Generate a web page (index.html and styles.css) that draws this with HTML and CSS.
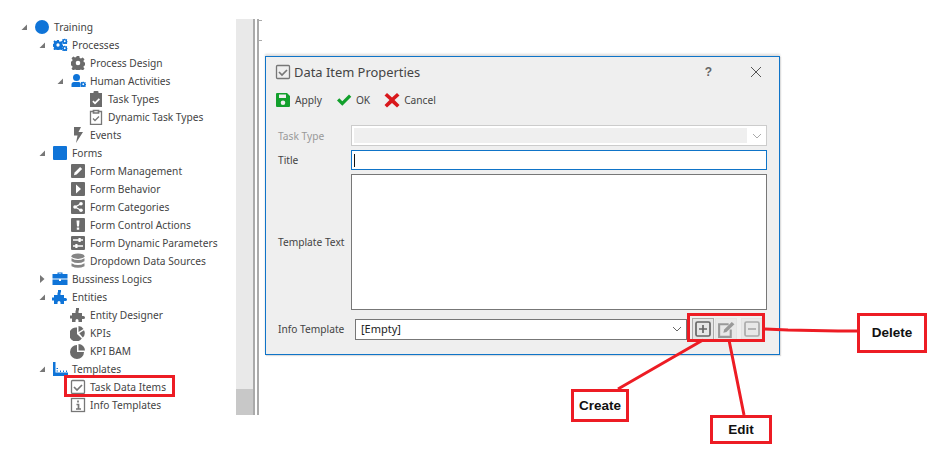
FILE: index.html
```html
<!DOCTYPE html>
<html lang="en">
<head>
<meta charset="utf-8">
<title>Data Item Properties</title>
<link rel="stylesheet" href="styles.css">
</head>
<body>
<svg class="defs" width="0" height="0">
  <symbol id="down" viewBox="0 0 8 8"><path d="M7 1.500V7H1.500z"/></symbol>
  <symbol id="right" viewBox="0 0 8 8"><path d="M2 0l4.500 4L2 8z"/></symbol>
  <symbol id="gear" viewBox="0 0 14 14"><path fill-rule="evenodd" d="M5.700 0h2.600l.4 2 1.300.6 1.700-1.100 1.800 1.800-1.100 1.700.6 1.300 2 .4v2.600l-2 .4-.6 1.300 1.100 1.700-1.800 1.800-1.700-1.100-1.300.6-.4 2H5.700l-.4-2-1.300-.6-1.700 1.100-1.800-1.800 1.100-1.700-.6-1.300-2-.4V5.700l2-.4.6-1.300L.5 2.300l1.800-1.800 1.700 1.100 1.300-.6zM7 4.700a2.300 2.300 0 1 0 0 4.600 2.300 2.300 0 0 0 0-4.600z"/></symbol>
  <symbol id="puzzle" viewBox="0 0 16 14"><path d="M6 0h3v2.500h-.5V5H12v3h1.500a1.500 1.500 0 1 1 0 3H12v3H8.500v-1.500a1.500 1.500 0 0 0-3 0V14H2v-3.500H0V7.500h2V5h3.500V2.500H6z"/></symbol>
</svg>
<main class="page">
  <nav class="tree">
    <div class="row l0"><svg class="arrow"><use href="#down" width="8" height="8"/></svg><svg class="ico blue" viewBox="0 0 16 16"><circle cx="8" cy="8" r="7"/></svg><span>Training</span></div>
    <div class="row l1"><svg class="arrow"><use href="#down" width="8" height="8"/></svg><svg class="ico blue" viewBox="0 0 16 16"><use href="#gear" x="1" y="3" width="10" height="10"/><use href="#gear" x="10" y="1.500" width="5.500" height="5.500"/><use href="#gear" x="10" y="8.500" width="5.500" height="5.500"/></svg><span>Processes</span></div>
    <div class="row l2"><span class="arrow"></span><svg class="ico gray" viewBox="0 0 16 16"><use href="#gear" x="1" y="1" width="14" height="14"/></svg><span>Process Design</span></div>
    <div class="row l2"><svg class="arrow"><use href="#down" width="8" height="8"/></svg><svg class="ico blue" viewBox="0 0 16 16"><circle cx="6.500" cy="4.500" r="3.500"/><path d="M1.500 14v-2.500Q1.500 9 4 9h5Q10.500 9 10.500 10.500V14z"/><use href="#gear" x="10.500" y="8.500" width="5.500" height="5.500"/></svg><span>Human Activities</span></div>
    <div class="row l3"><svg class="ico gray" viewBox="0 0 16 16"><path fill-rule="evenodd" d="M2 2h3.500V1q0-1 1-1h3q1 0 1 1v1H14v14H2zm3.500 7.500L4.300 10.700l2.700 2.800 5-5-1.200-1.200L7 11.100z"/></svg><span>Task Types</span></div>
    <div class="row l3"><svg class="ico outline" viewBox="0 0 16 16"><path d="M5.500 2.500h-3v13h11v-13h-3"/><path class="sw2" d="M5.500 1.500h5v2.500h-5z"/><path d="M5 9.500l2 2 4-4"/></svg><span>Dynamic Task Types</span></div>
    <div class="row l2"><span class="arrow"></span><svg class="ico gray" viewBox="0 0 16 16"><path d="M4 0h7L8.500 5H13L6 16l1.500-7.500H4z"/></svg><span>Events</span></div>
    <div class="row l1"><svg class="arrow"><use href="#down" width="8" height="8"/></svg><svg class="ico blue" viewBox="0 0 16 16"><rect x="1" y="1" width="14" height="14" rx="1"/></svg><span>Forms</span></div>
    <div class="row l2"><span class="arrow"></span><svg class="ico" viewBox="0 0 16 16"><rect class="sq" x="1" y="1" width="14" height="14" rx="1"/><path class="wh" d="M4 12.200l.6-2.600 5.500-5.500 2 2-5.500 5.500z"/></svg><span>Form Management</span></div>
    <div class="row l2"><span class="arrow"></span><svg class="ico" viewBox="0 0 16 16"><rect class="sq" x="1" y="1" width="14" height="14" rx="1"/><path class="wh" d="M6 3.500L11 8l-5 4.500z"/></svg><span>Form Behavior</span></div>
    <div class="row l2"><span class="arrow"></span><svg class="ico" viewBox="0 0 16 16"><rect class="sq" x="1" y="1" width="14" height="14" rx="1"/><circle class="wh" cx="11" cy="4.700" r="1.800"/><circle class="wh" cx="11" cy="11.300" r="1.800"/><circle class="wh" cx="5" cy="8" r="1.800"/><path class="wl" d="M11 4.700L5 8l6 3.300"/></svg><span>Form Categories</span></div>
    <div class="row l2"><span class="arrow"></span><svg class="ico" viewBox="0 0 16 16"><rect class="sq" x="1" y="1" width="14" height="14" rx="1"/><path class="wh" d="M6.500 3.500h3L9 9.500H7zM6.800 10.500h2.400v2.200H6.800z"/></svg><span>Form Control Actions</span></div>
    <div class="row l2"><span class="arrow"></span><svg class="ico" viewBox="0 0 16 16"><rect class="sq" x="1" y="1" width="14" height="14" rx="1"/><path class="wl" d="M3 5h10M3 11h10"/><path class="wh" d="M8.500 3h2.200v4H8.500zM5.300 9h2.200v4H5.300z"/></svg><span>Form Dynamic Parameters</span></div>
    <div class="row l2"><span class="arrow"></span><svg class="ico lt" viewBox="0 0 16 16"><ellipse cx="8" cy="3.200" rx="6.500" ry="2.700"/><path d="M1.500 5.200Q8 9 14.500 5.200v3Q8 12 1.500 8.200zM1.500 10.200Q8 14 14.500 10.200v3Q8 16.500 1.500 13.200z"/></svg><span>Dropdown Data Sources</span></div>
    <div class="row l1"><svg class="arrow"><use href="#right" width="8" height="8"/></svg><svg class="ico blue" viewBox="0 0 16 16"><path fill-rule="evenodd" d="M5.500 3V1.500h5V3H15.500v4.500h-15V3zM6.700 2.500V3h2.600v-.5zM.5 8.500H7V10h2V8.500h6.500V14H.5z"/></svg><span>Bussiness Logics</span></div>
    <div class="row l1"><svg class="arrow"><use href="#down" width="8" height="8"/></svg><svg class="ico blue" viewBox="0 0 16 16"><use href="#puzzle" x="0" y="1" width="16" height="14"/></svg><span>Entities</span></div>
    <div class="row l2"><span class="arrow"></span><svg class="ico gray" viewBox="0 0 16 16"><use href="#puzzle" x="0" y="1" width="16" height="14"/></svg><span>Entity Designer</span></div>
    <div class="row l2"><span class="arrow"></span><svg class="ico gray" viewBox="0 0 16 16"><path d="M7 2.500V9l4.800 4.600A7 7 0 1 1 7 2.500z"/><path d="M8.500 1a6.500 6.500 0 0 1 5 3L8.500 7z"/><path d="M14 5.200A6.500 6.500 0 0 1 12.800 12.600L9.300 8.200z"/></svg><span>KPIs</span></div>
    <div class="row l2"><span class="arrow"></span><svg class="ico gray" viewBox="0 0 16 16"><path d="M7 2v7h7A7 7 0 1 1 7 2z"/><path d="M8.500 1A6.500 6.500 0 0 1 15 7.500H8.500z"/></svg><span>KPI BAM</span></div>
    <div class="row l1"><svg class="arrow"><use href="#down" width="8" height="8"/></svg><svg class="ico blue" viewBox="0 0 16 16"><path d="M1 1h2.500v10.500H16V15H1z"/><path d="M4.500 7H6v1H4.500zM4.500 9.500H6v1H4.500zM8 9.500h1V11H8zM11 9.500h1V11h-1zM14 9.500h1V11h-1z"/></svg><span>Templates</span></div>
    <div class="row l2"><span class="arrow"></span><svg class="ico outline" viewBox="0 0 16 16"><rect x="1.500" y="1.500" width="13" height="13" rx="1"/><path class="sw2" d="M4 8l3 3 5-5"/></svg><span>Task Data Items</span></div>
    <div class="row l2"><span class="arrow"></span><svg class="ico outline" viewBox="0 0 16 16"><rect x="1.500" y="1.500" width="13" height="13"/><path class="sw2" d="M6.500 7.500H8.500V12M6 12h5M8 3.500v2"/></svg><span>Info Templates</span></div>
  </nav>
  <div class="scroll"><div class="thumb"></div></div>
  <div class="rule"></div>
  <div class="rule second"><i></i><i></i></div>

  <section class="dialog">
    <header class="dlg-title">
      <svg class="ico outline" viewBox="0 0 16 16"><rect x="1.500" y="1.500" width="13" height="13" rx="1"/><path class="sw2" d="M4 8l3 3 5-5"/></svg>
      <h1>Data Item Properties</h1>
      <b class="help">?</b>
      <svg class="close" viewBox="0 0 12 12"><path d="M1 1l10 10M11 1L1 11"/></svg>
    </header>
    <div class="toolbar">
      <button class="tool"><svg class="ico" viewBox="0 0 16 16"><path class="green" fill-rule="evenodd" d="M1 2q0-1 1-1h10l3 3v10q0 1-1 1H2q-1 0-1-1zM4 2.500V6h7V2.500zM8 8.500a2.300 2.300 0 1 0 0 4.600 2.300 2.300 0 0 0 0-4.600z"/></svg>Apply</button>
      <button class="tool"><svg class="ico" viewBox="0 0 16 16"><path class="green" d="M1 8.500l2.300-2.300 3 3L13 2.500l2.300 2.300-9 9z"/></svg>OK</button>
      <button class="tool"><svg class="ico" viewBox="0 0 16 16"><path class="red" d="M3 1l5 4.500L13 1l2.500 2.500L10.500 8l5 5-2.500 2.500L8 11l-5 4.500L.5 13l5-5-5-4.500z"/></svg>Cancel</button>
    </div>
    <div class="form">
      <label class="muted">Task Type</label>
      <div class="field disabled"><div class="fill"></div><svg class="chev pale" viewBox="0 0 10 6"><path d="M1 1l4 4 4-4"/></svg></div>
      <label>Title</label>
      <div class="field focus"><i class="caret"></i></div>
      <label>Template Text</label>
      <div class="field area"></div>
    </div>
    <div class="info-row">
      <label>Info Template</label>
      <div class="combo"><span>[Empty]</span><svg class="chev" viewBox="0 0 10 6"><path d="M1 1l4 4 4-4"/></svg></div>
      <div class="btns">
        <button class="mini active"><svg viewBox="0 0 16 16"><rect x="1" y="1" width="14" height="14" rx="1.500"/><path d="M8 4v8M4 8h8"/></svg></button>
        <button class="mini"><svg class="soft big" viewBox="0 0 18 16"><path class="line" d="M11 3H2v12h11V8"/><path class="solid" d="M6 11l.8-3L14 .8 16.500 3 9 10.300z"/></svg></button>
        <button class="mini spaced"><svg class="soft" viewBox="0 0 16 16"><rect x="1" y="1" width="14" height="14" rx="1.500"/><path d="M4 8h8"/></svg></button>
      </div>
    </div>
  </section>

  <div class="mark mark-item"></div>
  <div class="mark mark-btns"></div>
  <svg class="leaders" viewBox="0 0 942 467">
    <path d="M765 329l23 1 50 1 20 0M703 340L618 389M729 340L744 415"/>
  </svg>
  <div class="callout c-create">Create</div>
  <div class="callout c-edit">Edit</div>
  <div class="callout c-delete">Delete</div>
</main>
</body>
</html>
```
FILE: styles.css
```css
* { box-sizing: border-box; }
html, body { margin: 0; padding: 0; background: #fff; }
body { font: 10.200px/18px "Noto Sans", "Liberation Sans", sans-serif; color: #444; }
.defs { position: absolute; }
.page { position: relative; display: flex; align-items: flex-start; width: 942px; height: 467px; overflow: hidden; }

.tree { width: 236px; flex: none; padding-top: 18px; }
.row { display: flex; align-items: center; height: 18px; white-space: nowrap; }
.l0 { padding-left: 20px; }
.l1 { padding-left: 38px; }
.l2 { padding-left: 56px; }
.l3 { padding-left: 89px; }
.arrow { display: block; flex: none; width: 15px; height: 8px; fill: #777; }
.ico { display: block; flex: none; width: 16px; height: 16px; margin-right: 3px; }
.row .ico { margin-left: -1px; margin-right: 4px; }
.blue { fill: #0f74d8; }
.gray { fill: #6b6b6b; }
.lt { fill: #858585; }
.outline { fill: none; stroke: #777; stroke-width: 1.300; }
.sw2 { stroke-width: 1.700; }
.sq { fill: #6b6b6b; }
.wh { fill: #fff; }
.wl { fill: none; stroke: #fff; stroke-width: 1.300; }

.scroll { width: 17px; height: 396px; margin-top: 19px; background: #e9e9e9; display: flex; flex-direction: column; justify-content: flex-end; flex: none; }
.thumb { height: 26px; background: #c8c8c8; }
.rule { width: 2px; height: 396px; margin-top: 19px; background: #aaa; flex: none; }
.second { margin-left: 2px; position: relative; display: flex; flex-direction: column; }
.second i { position: absolute; left: 2px; width: 3px; height: 1px; background: #aaa; top: 1px; }
.second i + i { top: 21px; }

.dialog { width: 515px; height: 299px; margin: 56px 0 0 6px; flex: none; background: #efefef; border: 1px solid #0f74c8; box-shadow: 0 -2px 2px #ddd, 1px 1px 1px #ddd; padding: 0 12px 0 9px; display: flex; flex-direction: column; }
.dlg-title { display: flex; align-items: center; height: 30px; }
.dlg-title .ico { width: 16px; height: 16px; margin: 0 3px 0 0; }
h1 { margin: 0; font-size: 12.900px; font-weight: 400; color: #444; flex: 1; }
.help { font: 700 12px/16px "Liberation Sans", sans-serif; color: #666; margin-right: 38px; }
.close { width: 12px; height: 12px; fill: none; stroke: #555; stroke-width: 1; margin-right: 5px; }
.toolbar { display: flex; gap: 14px; height: 26px; align-items: center; margin-bottom: 12px; }
.tool { display: flex; align-items: center; border: 0; padding: 0; background: none; font: inherit; color: #444; }
.tool .ico { margin-right: 4px; }
.green { fill: #12a02c; }
.red { fill: #d9181c; }
.form { display: grid; grid-template-columns: 73px 416px; grid-template-rows: 21px 20px 136px; row-gap: 4px; margin-left: 3px; }
.form label { align-self: center; }
.muted { color: #999; }
.field { background: #fff; border: 1px solid #777; display: flex; align-items: center; }
.disabled { border: 1px solid #ccc; padding: 2px 0 2px 2px; align-items: stretch; }
.fill { width: 393px; background: #efefef; }
.focus { border: 1px solid #0f74c8; padding-left: 2px; }
.caret { width: 1px; height: 13px; background: #111; }
.chev { width: 10px; height: 6px; fill: none; stroke: #666; stroke-width: 1; margin-left: auto; margin-right: 4px; align-self: center; }
.pale { stroke: #aaa; }
.info-row { display: flex; align-items: center; height: 22px; margin: 8px 0 0 3px; }
.info-row label { width: 77px; }
.combo { width: 332px; height: 21px; background: #fff; border: 1px solid #777; display: flex; align-items: center; padding-left: 5px; font-size: 11px; color: #222; }
.btns { display: flex; gap: 1px; margin-left: 5px; }
.mini { width: 22px; height: 22px; padding: 0; display: flex; align-items: center; justify-content: center; background: #e8e8e8; border: 1px solid #e2e2e2; }
.mini.active { border-color: #aaa; background: #e6e6e6; }
.mini.spaced { margin-left: 3px; }
.mini svg { width: 16px; height: 16px; fill: none; stroke: #666; stroke-width: 1.700; }
.mini .soft { stroke: #aaa; }
.mini .big { width: 19px; height: 17px; stroke: #999; }
.mini .solid { fill: #999; stroke: none; }
.mini .line { stroke-width: 2; }

.mark { position: absolute; border: 3px solid #ed1c24; }
.mark-item { left: 64px; top: 375px; width: 111px; height: 22px; }
.mark-btns { left: 687px; top: 313px; width: 78px; height: 29px; }
.leaders { position: absolute; left: 0; top: 0; width: 942px; height: 467px; fill: none; stroke: #ed1c24; stroke-width: 3; pointer-events: none; }
.callout { position: absolute; display: flex; align-items: center; justify-content: center; background: #fff; border: 3px solid #ed1c24; font: 700 13.500px/16px "Liberation Sans", sans-serif; color: #111; }
.c-create { left: 571px; top: 389px; width: 58px; height: 33px; }
.c-edit { left: 710px; top: 415px; width: 62px; height: 29px; }
.c-delete { left: 857px; top: 313px; width: 70px; height: 40px; }
```
